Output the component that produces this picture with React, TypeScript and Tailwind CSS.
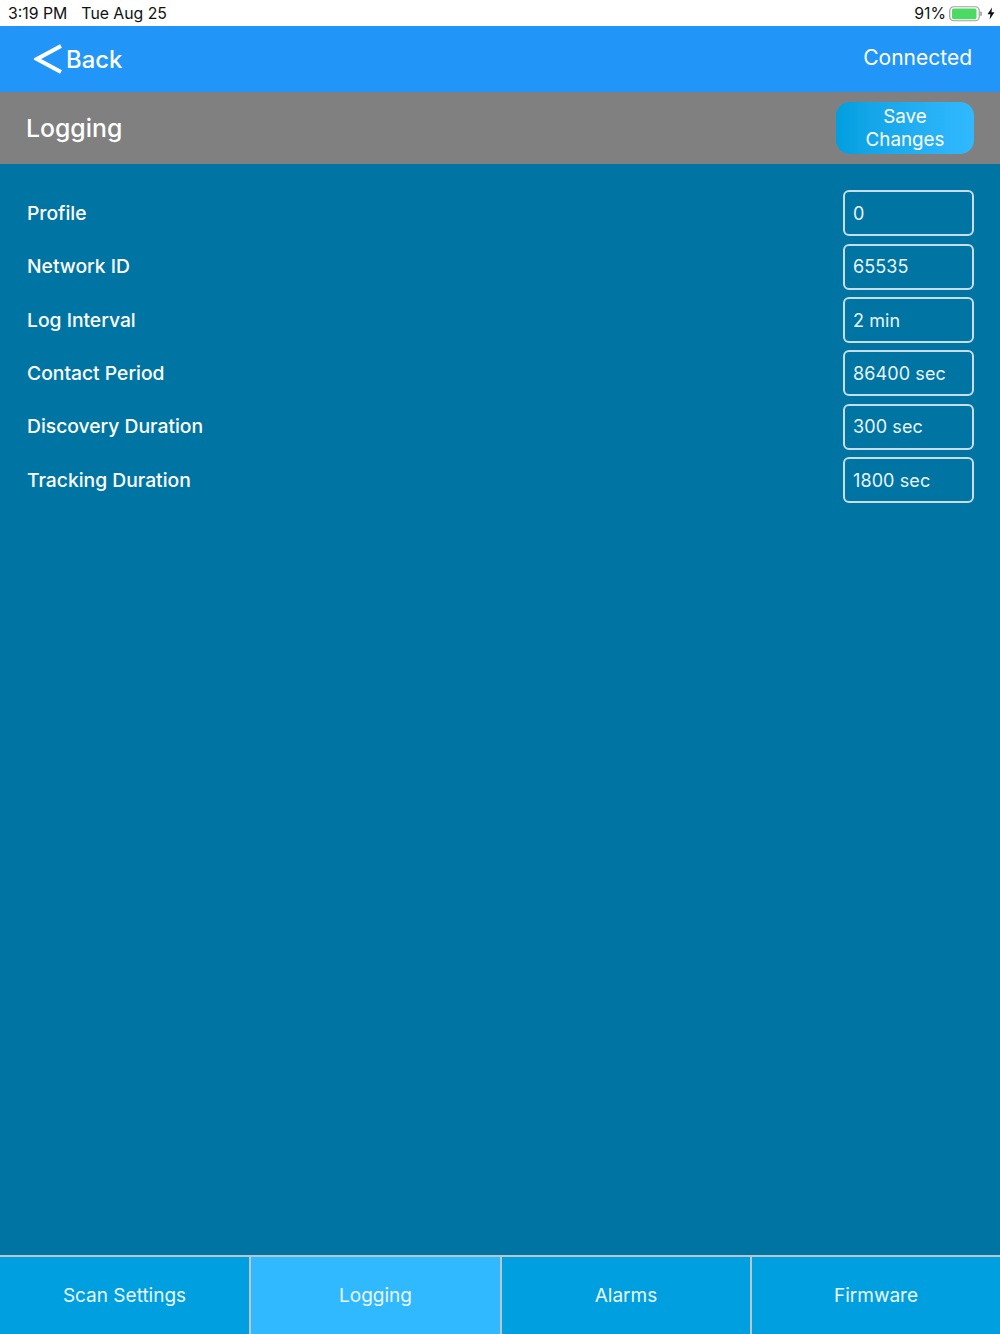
import React from 'react';

const rows = [
  { label: 'Profile', value: '0' },
  { label: 'Network ID', value: '65535' },
  { label: 'Log Interval', value: '2 min' },
  { label: 'Contact Period', value: '86400 sec' },
  { label: 'Discovery Duration', value: '300 sec' },
  { label: 'Tracking Duration', value: '1800 sec' },
];

const tabs = ['Scan Settings', 'Logging', 'Alarms', 'Firmware'];

const StatusBar: React.FC = () => (
  <div className="h-[26px] shrink-0 bg-white flex items-center justify-between pl-2 pr-[4px] pt-[1px] text-[15.8px] text-[#111]">
    <div className="flex gap-[14px]">
      <span>3:19 PM</span>
      <span>Tue Aug 25</span>
    </div>
    <div className="flex items-center gap-[3px]">
      <span>91%</span>
      <svg width="33" height="16" viewBox="0 0 33 16">
        <rect x="0.75" y="0.75" width="29.5" height="14" rx="4" fill="none" stroke="#a0a0a0" strokeWidth="1.2" />
        <rect x="3" y="2.5" width="24.5" height="10.8" rx="1.8" fill="#4cd964" />
        <rect x="31.2" y="5.5" width="1.6" height="4.5" rx="0.8" fill="#a0a0a0" />
      </svg>
      <svg width="8" height="13" viewBox="0 0 8 12" className="mr-px ml-[2px]">
        <path d="M5 0 L0.5 6.8 H3.4 L2.6 12 L7.5 4.8 H4.5 Z" fill="#111" />
      </svg>
    </div>
  </div>
);

const App: React.FC = () => {
  return (
    <div className="w-[1000px] h-[1334px] flex flex-col bg-[#0075a3] font-['Inter',sans-serif] text-white overflow-hidden">
      <StatusBar />

      <div className="h-[66px] shrink-0 bg-[#2196f8] flex items-center justify-between pl-[34px] pr-[28px]">
        <div className="flex items-center gap-[4px]">
          <svg width="28" height="30" viewBox="0 0 28 30">
            <path d="M27 2 L3 15 L27 28" fill="none" stroke="#fff" strokeWidth="4" />
          </svg>
          <span className="text-[23.8px] font-[550] translate-y-px">Back</span>
        </div>
        <span className="text-[21px] -translate-y-px">Connected</span>
      </div>

      <div className="h-[72px] shrink-0 bg-[#808080] flex items-center justify-between pl-[26px] pr-[26px]">
        <span className="text-[24.8px] font-[550] translate-y-px">Logging</span>
        <div className="w-[138px] h-[52px] rounded-[14px] bg-gradient-to-r from-[#009fe0] to-[#31b9ff] flex items-center justify-center text-center text-[18.8px] leading-[23px]">
          Save
          <br />
          Changes
        </div>
      </div>

      <div className="flex-1 pt-[26.4px] pl-[26px] pr-[26px] flex flex-col gap-[7.33px]">
        {rows.map((row) => (
          <div key={row.label} className="flex items-center justify-between">
            <span className="text-[19.3px] font-[550] ml-px">{row.label}</span>
            <div className="w-[131px] h-[46px] rounded-[6px] border-2 border-[#c8dde7] flex items-center pl-[8px] text-[18px] tracking-[0.1px] text-[#e9f4f9]">
              {row.value}
            </div>
          </div>
        ))}
      </div>

      <div className="h-[79px] shrink-0 grid grid-cols-[249px_251px_250px_250px] border-t-2 border-[#b9c6cc] bg-[#009fe0] text-[19px] text-[#e9f7ff]">
        {tabs.map((tab, i) => (
          <div
            key={tab}
            className={
              i === 1
                ? 'flex items-center justify-center bg-[#31b9ff] border-l-2 border-[#b9c6cc]'
                : i === 0
                  ? 'flex items-center justify-center'
                  : 'flex items-center justify-center border-l-2 border-[#b9c6cc]'
            }
          >
            <span className="translate-y-px">{tab}</span>
          </div>
        ))}
      </div>
    </div>
  );
};

export default App;
